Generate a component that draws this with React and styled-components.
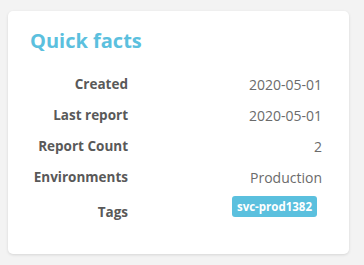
import styled, { createGlobalStyle } from "styled-components";

const GlobalStyle = createGlobalStyle`
  body {
    margin: 0;
    background: #f3f3f3;
    font-family: "Open Sans", "Noto Sans", sans-serif;
  }
`;

const Page = styled.div`
  padding: 11px 15px 11px 8px;
`;

const Card = styled.div`
  background: #fff;
  border-radius: 5px;
  box-shadow: 0 1px 3px rgba(0, 0, 0, 0.12);
  padding: 15px 27px 23px 22px;
  height: 243px;
  box-sizing: border-box;
`;

const Title = styled.h2`
  margin: 0 0 13px;
  font-size: 20px;
  font-weight: 700;
  line-height: 30px;
  color: #5bc0de;
`;

const Facts = styled.table`
  width: 100%;
  border-collapse: collapse;
  font-size: 14px;
`;

const Label = styled.th`
  width: 98px;
  text-align: right;
  font-size: 13.5px;
  font-weight: 700;
  color: #595959;
  padding: 7px 0;
  line-height: 17px;
  white-space: nowrap;
  vertical-align: ${(p) => (p.$bottom ? "bottom" : "middle")};
`;

const Value = styled.td`
  text-align: right;
  color: #6b6b6b;
  padding: ${(p) => (p.$tag ? "3px 0 11px" : "7px 0")};
  line-height: 17px;
`;

const Tag = styled.span`
  display: inline-block;
  vertical-align: top;
  background: #5bc0de;
  color: #fff;
  font-weight: 700;
  font-size: 11.5px;
  line-height: 21px;
  padding: 0 5px;
  border-radius: 3px;
  margin-right: 5px;
`;

const facts = [
  ["Created", "2020-05-01"],
  ["Last report", "2020-05-01"],
  ["Report Count", "2"],
  ["Environments", "Production"],
];

export default function App() {
  return (
    <Page>
      <GlobalStyle />
      <Card>
        <Title>Quick facts</Title>
        <Facts>
          <tbody>
            {facts.map(([label, value]) => (
              <tr key={label}>
                <Label>{label}</Label>
                <Value>{value}</Value>
              </tr>
            ))}
            <tr>
              <Label $bottom>Tags</Label>
              <Value $tag>
                <Tag>svc-prod1382</Tag>
              </Value>
            </tr>
          </tbody>
        </Facts>
      </Card>
    </Page>
  );
}
